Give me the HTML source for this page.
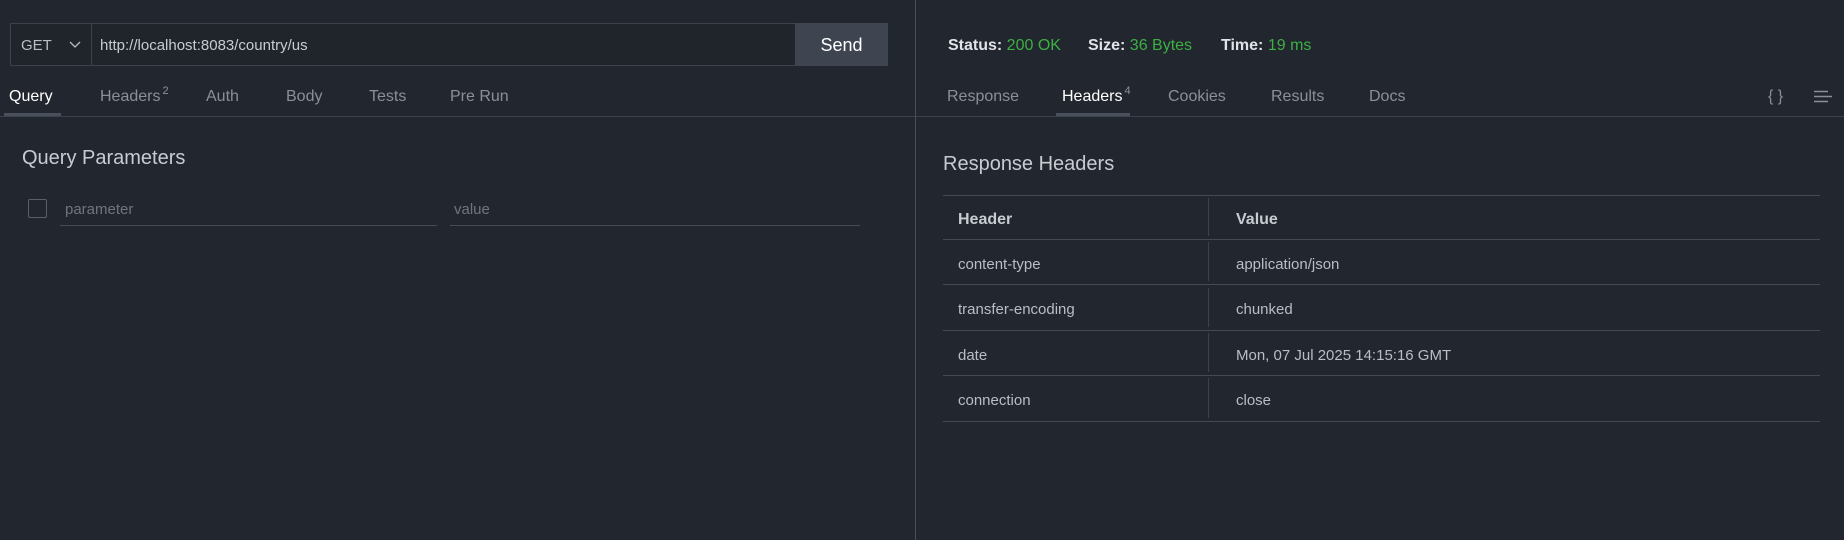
<!DOCTYPE html>
<html><head><meta charset="utf-8"><style>
*{box-sizing:border-box;margin:0;padding:0}
body{width:1844px;height:540px;background:#22262e;font-family:"Liberation Sans",sans-serif;color:#c8ccd2;position:relative;overflow:hidden}
.a{position:absolute;white-space:nowrap}
.tab{font-size:16px;color:#8a9099;top:88px;line-height:18px}
.tab.on{color:#fff}
sup{font-size:11px;position:relative;top:-7px;vertical-align:baseline;line-height:0;color:#8a9099;margin-left:2px}
.hl{position:absolute;height:1px;background:#3c424b}
.vl{position:absolute;width:1px;background:#3c424b}
.cell{font-size:15px;color:#b9bec5}
</style></head><body>
<div class="a" style="left:10px;top:23px;width:878px;height:43px;border:1px solid #3c424b;background:#20242b"></div>
<div class="vl" style="left:91px;top:24px;height:41px"></div>
<div class="a" style="left:21px;top:37px;font-size:15px;color:#b9bec5">GET</div>
<svg class="a" style="left:69px;top:41px" width="12" height="8" viewBox="0 0 12 8"><path d="M1 1l5 5 5-5" fill="none" stroke="#b9bec5" stroke-width="1.3"/></svg>
<div class="a" style="left:100px;top:37px;font-size:15px;color:#c8ccd2">http://localhost:8083/country/us</div>
<div class="a" style="left:795px;top:23px;width:93px;height:43px;background:#3e4450;color:#fff;font-size:18px;text-align:center;line-height:45px">Send</div>
<div class="a tab on" style="left:9px">Query</div>
<div class="a" style="left:4px;top:113px;width:57px;height:3px;background:#4a505b"></div>
<div class="a tab" style="left:100px">Headers<sup>2</sup></div>
<div class="a tab" style="left:206px">Auth</div>
<div class="a tab" style="left:286px">Body</div>
<div class="a tab" style="left:369px">Tests</div>
<div class="a tab" style="left:450px">Pre Run</div>
<div class="hl" style="left:0;top:116px;width:915px"></div>
<div class="vl" style="left:915px;top:0;height:540px;background:#4a4f57"></div>
<div class="a" style="left:22px;top:147px;font-size:20px;color:#c8ccd2">Query Parameters</div>
<div class="a" style="left:28px;top:199px;width:19px;height:19px;border:1.5px solid #5a6069;border-radius:2px"></div>
<div class="a" style="left:65px;top:201px;font-size:15px;color:#6f757e">parameter</div>
<div class="hl" style="left:60px;top:225px;width:377px;background:#464c55"></div>
<div class="a" style="left:454px;top:201px;font-size:15px;color:#6f757e">value</div>
<div class="hl" style="left:450px;top:225px;width:410px;background:#464c55"></div>
<div class="a" style="left:948px;top:37px;font-size:16px;font-weight:bold;color:#e0e3e7">Status: <span style="color:#3cb043;font-weight:normal">200 OK</span></div>
<div class="a" style="left:1088px;top:37px;font-size:16px;font-weight:bold;color:#e0e3e7">Size: <span style="color:#3cb043;font-weight:normal">36 Bytes</span></div>
<div class="a" style="left:1221px;top:37px;font-size:16px;font-weight:bold;color:#e0e3e7">Time: <span style="color:#3cb043;font-weight:normal">19 ms</span></div>
<div class="a tab" style="left:947px">Response</div>
<div class="a tab on" style="left:1062px">Headers<sup>4</sup></div>
<div class="a" style="left:1056px;top:113px;width:74px;height:3px;background:#4a505b"></div>
<div class="a tab" style="left:1168px">Cookies</div>
<div class="a tab" style="left:1271px">Results</div>
<div class="a tab" style="left:1369px">Docs</div>
<div class="a" style="left:1768px;top:88px;font-size:16px;color:#8a9099">{ }</div>
<svg class="a" style="left:1814px;top:90px" width="18" height="14" viewBox="0 0 18 14"><path d="M0 1.5h14M0 6.5h18M0 11.5h14" stroke="#8a9099" stroke-width="1.4"/></svg>
<div class="hl" style="left:916px;top:116px;width:928px"></div>
<div class="a" style="left:943px;top:153px;font-size:20px;color:#c8ccd2">Response Headers</div>
<div class="hl" style="left:943px;top:195px;width:877px;background:#444a53"></div>
<div class="hl" style="left:943px;top:239px;width:877px;background:#444a53"></div>
<div class="hl" style="left:943px;top:284px;width:877px;background:#444a53"></div>
<div class="hl" style="left:943px;top:330px;width:877px;background:#444a53"></div>
<div class="hl" style="left:943px;top:375px;width:877px;background:#444a53"></div>
<div class="hl" style="left:943px;top:421px;width:877px;background:#444a53"></div>
<div class="vl" style="left:1208px;top:198px;height:38px"></div>
<div class="vl" style="left:1208px;top:242px;height:39px"></div>
<div class="vl" style="left:1208px;top:288px;height:39px"></div>
<div class="vl" style="left:1208px;top:333px;height:39px"></div>
<div class="vl" style="left:1208px;top:378px;height:40px"></div>
<div class="a" style="left:958px;top:211px;font-size:16px;font-weight:bold;color:#c8ccd2">Header</div>
<div class="a" style="left:1236px;top:211px;font-size:16px;font-weight:bold;color:#c8ccd2">Value</div>
<div class="a cell" style="left:958px;top:256px">content-type</div>
<div class="a cell" style="left:1236px;top:256px">application/json</div>
<div class="a cell" style="left:958px;top:301px">transfer-encoding</div>
<div class="a cell" style="left:1236px;top:301px">chunked</div>
<div class="a cell" style="left:958px;top:347px">date</div>
<div class="a cell" style="left:1236px;top:347px">Mon, 07 Jul 2025 14:15:16 GMT</div>
<div class="a cell" style="left:958px;top:392px">connection</div>
<div class="a cell" style="left:1236px;top:392px">close</div>
</body></html>
